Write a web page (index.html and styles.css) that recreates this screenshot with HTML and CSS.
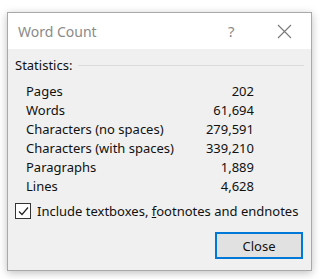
FILE: index.html
```html
<html>
<head>
    <link rel="stylesheet" href="styles.css">
</head>
<body>
    <div class="dialog">
        <div class="titlebar">
            <span class="title">Word Count</span>
            <span class="help">?</span>
            <span class="close-x">
                <svg width="15" height="15" viewBox="0 0 15 15"><path d="M1 1 L14 14 M14 1 L1 14" stroke="#777" stroke-width="1.1" fill="none"/></svg>
            </span>
        </div>
        <div class="content">
            <div class="group-head">
                <span>Statistics:</span>
                <div class="rule"></div>
            </div>
            <div class="stats">
                <div class="row"><span>Pages</span><span class="num">202</span></div>
                <div class="row"><span>Words</span><span class="num">61,694</span></div>
                <div class="row"><span>Characters (no spaces)</span><span class="num">279,591</span></div>
                <div class="row"><span>Characters (with spaces)</span><span class="num">339,210</span></div>
                <div class="row"><span>Paragraphs</span><span class="num">1,889</span></div>
                <div class="row"><span>Lines</span><span class="num">4,628</span></div>
            </div>
            <label class="check">
                <span class="box">
                    <svg width="13" height="13" viewBox="0 0 13 13"><path d="M2 6.5 L5 9.5 L11 2.5" stroke="#222" stroke-width="1.2" fill="none"/></svg>
                </span>
                <span>Include textboxes, <u>f</u>ootnotes and endnotes</span>
            </label>
            <div class="actions">
                <button class="button">Close</button>
            </div>
        </div>
    </div>
</body>
</html>
```
FILE: styles.css
```css
body {
    margin: 0;
    background-color: #fff;
    font-family: "Noto Sans", "Open Sans", sans-serif;
    font-size: 13px;
    color: #111;
}
.dialog {
    width: 303px;
    height: 257px;
    margin: 12px 0 0 7px;
    border: 1px solid #a9a9a9;
    background-color: #f0f0f0;
    box-shadow: 0 2px 8px rgba(0, 0, 0, 0.25);
    display: flex;
    flex-direction: column;
}
.titlebar {
    height: 36px;
    background-color: #fff;
    display: flex;
    align-items: center;
    padding: 0 0 0 10px;
    color: #8a8a8a;
}
.title {
    flex: 1;
    font-size: 14px;
}
.help {
    font-size: 15px;
    width: 49px;
    text-align: left;
}
.close-x {
    width: 34px;
    display: flex;
}
.content {
    flex: 1;
    padding: 7px 7px 0 7px;
}
.group-head {
    display: flex;
    align-items: center;
    gap: 6px;
}
.rule {
    flex: 1;
    height: 1px;
    background-color: #dcdcdc;
}
.stats {
    padding: 8px 0 0 11px;
    width: 228px;
}
.row {
    display: flex;
    justify-content: space-between;
    height: 19px;
    line-height: 19px;
}
.check {
    display: flex;
    align-items: center;
    gap: 6px;
    margin-top: 6px;
}
.box {
    width: 14px;
    height: 14px;
    border: 1px solid #333;
    background-color: #fff;
    display: flex;
    align-items: center;
    justify-content: center;
}
.actions {
    display: flex;
    justify-content: flex-end;
    margin-top: 12px;
    padding-right: 1px;
}
.button {
    width: 88px;
    height: 27px;
    font-family: inherit;
    font-size: 13px;
    color: #111;
    background-color: #e1e1e1;
    border: 2px solid #0078d7;
    padding: 0;
}
```
